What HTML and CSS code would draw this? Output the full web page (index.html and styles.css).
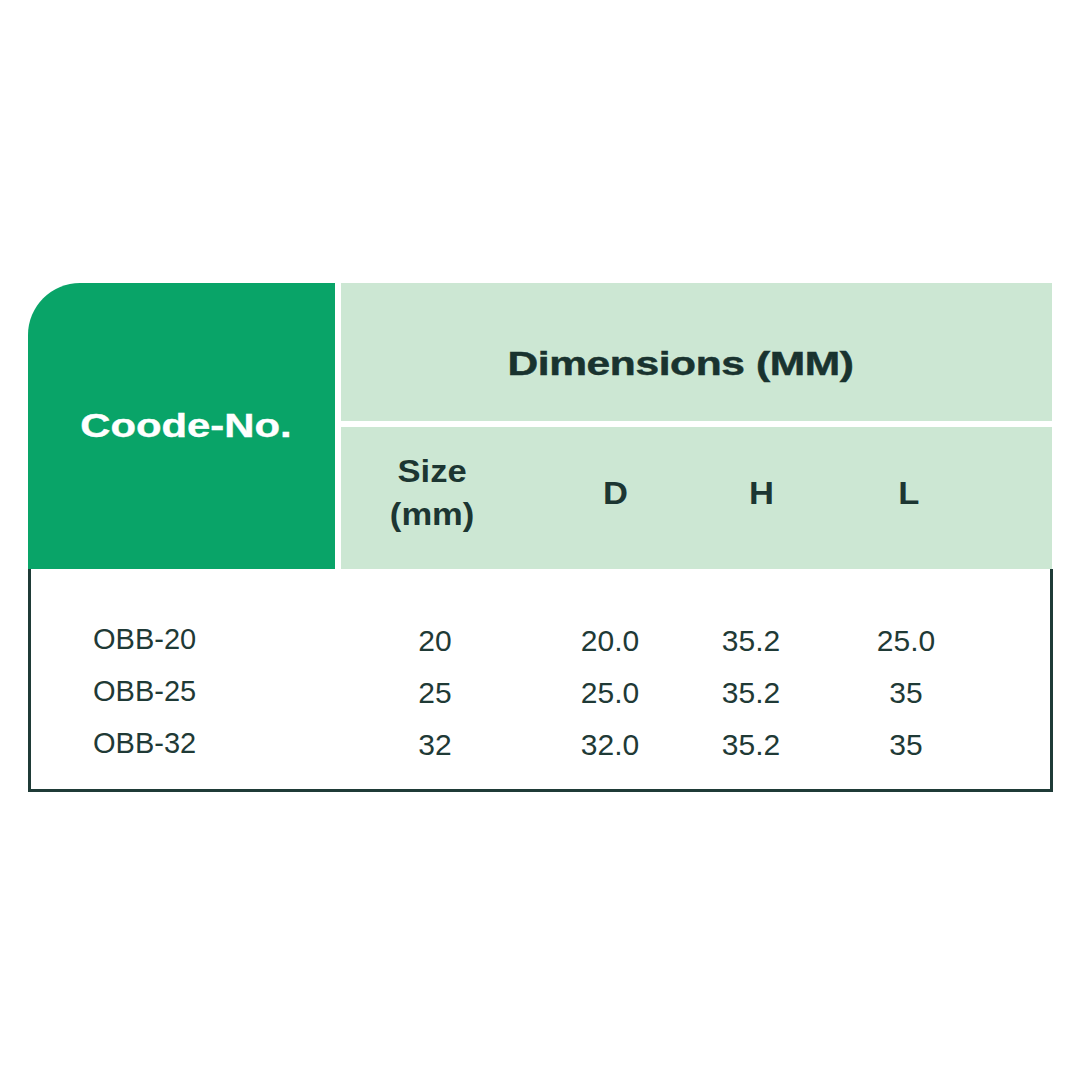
FILE: index.html
```html
<!DOCTYPE html>
<html lang="en">
<head>
<meta charset="utf-8">
<title>Dimensions table</title>
<link rel="stylesheet" href="styles.css">
</head>
<body>
<div class="page">
  <div class="table">
    <div class="head">
      <div class="code-head"><span class="code-title">Coode-No.</span></div>
      <div class="dim-head"><span class="dim-title">Dimensions (MM)</span></div>
      <div class="col-head">
        <div class="col-label"><span class="lbl">Size<br>(mm)</span></div>
        <div class="col-label"><span class="lbl">D</span></div>
        <div class="col-label"><span class="lbl">H</span></div>
        <div class="col-label"><span class="lbl">L</span></div>
        <div></div>
      </div>
    </div>
    <div class="body">
      <div class="row">
        <div class="cell code">OBB-20</div>
        <div class="cell num">20</div>
        <div class="cell num">20.0</div>
        <div class="cell num">35.2</div>
        <div class="cell num">25.0</div>
      </div>
      <div class="row">
        <div class="cell code">OBB-25</div>
        <div class="cell num">25</div>
        <div class="cell num">25.0</div>
        <div class="cell num">35.2</div>
        <div class="cell num">35</div>
      </div>
      <div class="row">
        <div class="cell code">OBB-32</div>
        <div class="cell num">32</div>
        <div class="cell num">32.0</div>
        <div class="cell num">35.2</div>
        <div class="cell num">35</div>
      </div>
    </div>
  </div>
</div>
</body>
</html>
```
FILE: styles.css
```css
html, body {
  margin: 0;
  padding: 0;
  background: #ffffff;
}

body {
  width: 1080px;
  height: 1080px;
  font-family: "Liberation Sans", Arial, sans-serif;
  color: #1c3632;
}

.page {
  padding: 283px 0 0 28px;
}

.table {
  width: 1025px;
}

.head {
  display: grid;
  grid-template-columns: 307px 711px;
  grid-template-rows: 138px 142px;
  column-gap: 6px;
  row-gap: 6px;
}

.code-head {
  grid-row: 1 / 3;
  background: #09a468;
  border-top-left-radius: 52px;
  display: flex;
  align-items: center;
  justify-content: center;
}

.code-title {
  display: inline-block;
  color: #ffffff;
  font-weight: 700;
  font-size: 34px;
  transform: scaleX(1.23);
  -webkit-text-stroke: 0.4px #ffffff;
  margin-left: 8px;
  margin-top: -2px;
}

.dim-head {
  background: #cce7d3;
  display: flex;
  align-items: center;
  justify-content: center;
  padding-top: 22px;
  padding-right: 32px;
  box-sizing: border-box;
}

.dim-title {
  display: inline-block;
  font-weight: 700;
  font-size: 34px;
  letter-spacing: -0.3px;
  transform: scaleX(1.25);
  -webkit-text-stroke: 0.5px #19332f;
  color: #19332f;
}

.col-head {
  background: #cce7d3;
  display: grid;
  grid-template-columns: 182px 186px 106px 188px 1fr;
  align-items: center;
  padding-bottom: 10px;
  box-sizing: border-box;
}

.col-label {
  text-align: center;
  font-weight: 700;
  font-size: 32px;
  line-height: 43px;
  color: #1c3632;
}

.lbl {
  display: inline-block;
  transform: scaleX(1.08);
}

.body {
  border: 3px solid #1f3b37;
  border-top: none;
  padding: 46px 0 18px 0;
}

.row {
  display: grid;
  grid-template-columns: 329px 150px 200px 82px 228px;
  height: 52px;
  align-items: center;
}

.cell {
  font-size: 30px;
  color: #1f3a36;
}

.code {
  padding-left: 62px;
  font-size: 29px;
  margin-top: -3px;
}

.num {
  text-align: center;
}
```
